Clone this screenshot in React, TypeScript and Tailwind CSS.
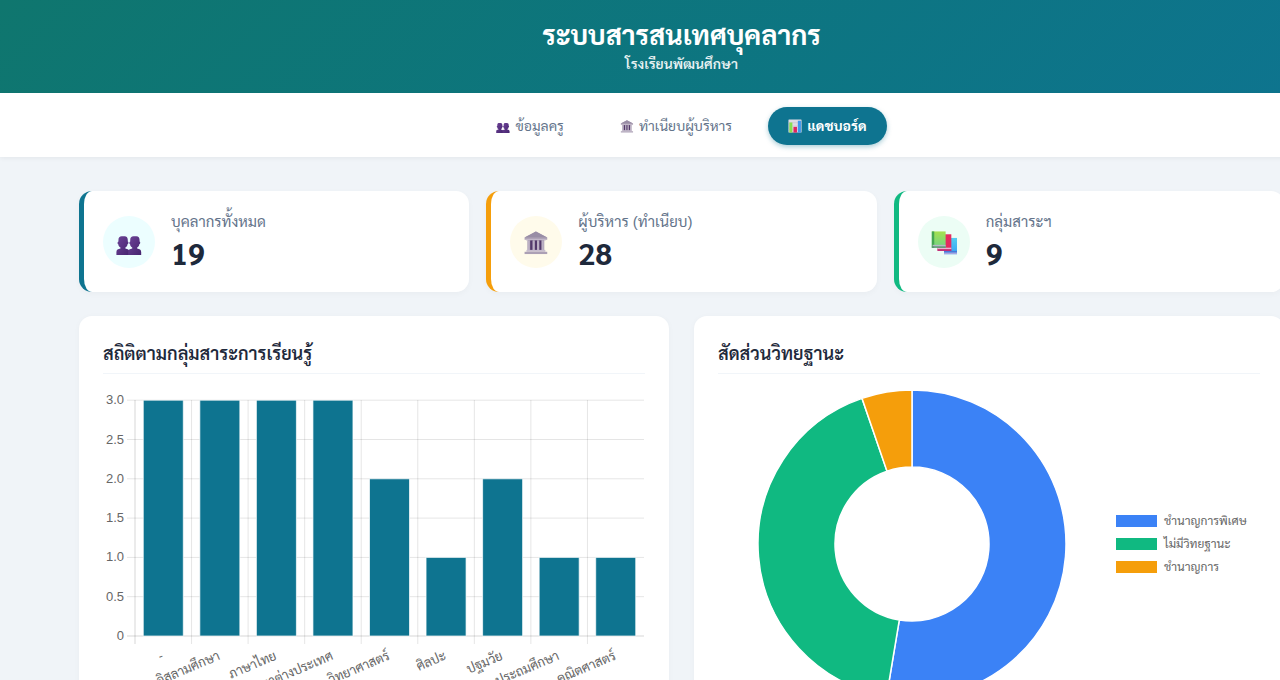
import type { ReactNode } from "react";

type IconProps = { className?: string };

function PeopleIcon({ className }: IconProps) {
  return (
    <svg viewBox="0 0 32 32" className={className} aria-hidden="true">
      <defs>
        <linearGradient id="bust" x1="0" y1="0" x2="1" y2="1">
          <stop offset="0" stopColor="#6d4397" />
          <stop offset="1" stopColor="#46246f" />
        </linearGradient>
      </defs>
      {[0, 14.5].map((x) => (
        <path
          key={x}
          transform={`translate(${x} 4)`}
          fill="url(#bust)"
          d="M3 9.500C3 6.500 4.500 5 7 5h3.500c2.800 0 4 1.800 4 4.500v2c1.200.3 1.200 3-.3 3.200-.3 2.300-1.200 3.300-2.700 4v1.300c2.900.5 5 1.500 5 4.200v3.800H.500v-3.800c0-2.700 2-3.700 5-4.200v-1.300c-1.500-.7-2.400-1.700-2.700-4-1.500-.2-1-2.900.2-3.200z"
        />
      ))}
    </svg>
  );
}

function BuildingIcon({ className }: IconProps) {
  return (
    <svg viewBox="0 0 32 32" className={className} aria-hidden="true">
      <g transform="translate(1 2) scale(.93)">
        <rect x="5" y="12" width="22" height="15" fill="#8d8299" />
        <path d="M16 1 31 9v3H1V9z" fill="#aea2b7" />
        <path d="M16 1 31 9H1z" fill="#998da6" />
        <rect x="3" y="11" width="26" height="2" fill="#c3b8ca" />
        {[8.5, 14, 19.5].map((x) => (
          <rect key={x} x={x} y="13" width="4" height="13" fill="#53396b" />
        ))}
        {[5, 11.5, 17.5, 23.5].map((x) => (
          <rect key={x} x={x} y="13" width="3" height="13" fill="#bdb1c5" />
        ))}
        <rect x="3.500" y="25.500" width="25" height="2.500" fill="#c7bdce" />
        <rect x="1" y="28" width="30" height="3" fill="#aca0b5" />
      </g>
    </svg>
  );
}

function BooksIcon({ className }: IconProps) {
  return (
    <svg viewBox="0 0 32 32" className={className} aria-hidden="true">
      <defs>
        <linearGradient id="greenBook" x1="0" y1="0" x2="0" y2="1">
          <stop offset="0" stopColor="#a5df4f" />
          <stop offset="1" stopColor="#70d385" />
        </linearGradient>
        <linearGradient id="blueBook" x1="0" y1="0" x2="0" y2="1">
          <stop offset="0" stopColor="#52cdf0" />
          <stop offset="1" stopColor="#35a2f5" />
        </linearGradient>
      </defs>
      <rect x="16" y="11" width="16" height="20" fill="url(#blueBook)" />
      <rect x="16" y="27" width="16" height="2" fill="#4a77d8" />
      <rect x="16" y="29" width="16" height="2" fill="#a9a5df" />
      <rect x="8" y="6.500" width="17" height="20" fill="#e5295f" />
      <rect x="8" y="23" width="17" height="2" fill="#e6b5d0" />
      <rect x="8" y="25" width="17" height="2" fill="#bf2c77" />
      <rect x="1" y="3" width="17" height="20" fill="url(#greenBook)" />
      <rect x="1" y="3" width="3" height="20" fill="#45a653" />
      <rect x="2" y="19.500" width="16" height="2" fill="#b8b7c5" />
      <rect x="1" y="21.500" width="17" height="1.500" fill="#5c8a78" />
    </svg>
  );
}

function BarsIcon({ className }: IconProps) {
  return (
    <svg viewBox="0 0 32 32" className={className} aria-hidden="true">
      <rect x="1" y="1" width="30" height="30" rx="1" fill="#dedae4" />
      <path d="M1 8.500h30M1 16h30M1 23.500h30" stroke="#bdb6c8" />
      <rect x="3" y="8" width="7" height="23" fill="#86e04f" />
      <rect x="12.500" y="18" width="8" height="13" fill="#e0245e" />
      <rect x="22.500" y="4" width="7" height="27" fill="#3f97ec" />
    </svg>
  );
}

const tabs: { label: string; icon: ReactNode; active?: boolean }[] = [
  { label: "ข้อมูลครู", icon: <PeopleIcon className="size-3.5" /> },
  { label: "ทำเนียบผู้บริหาร", icon: <BuildingIcon className="size-3.5" /> },
  { label: "แดชบอร์ด", icon: <BarsIcon className="size-3.5" />, active: true },
];

const stats = [
  {
    label: "บุคลากรทั้งหมด",
    value: 19,
    border: "border-[#0e7490]",
    circle: "bg-[#ecfeff]",
    icon: <PeopleIcon className="size-[26px]" />,
  },
  {
    label: "ผู้บริหาร (ทำเนียบ)",
    value: 28,
    border: "border-[#f59e0b]",
    circle: "bg-[#fffbeb]",
    icon: <BuildingIcon className="size-[26px]" />,
  },
  {
    label: "กลุ่มสาระฯ",
    value: 9,
    border: "border-[#10b981]",
    circle: "bg-[#ecfdf5]",
    icon: <BooksIcon className="size-[26px]" />,
  },
];

const subjects = [
  { name: "-", count: 3 },
  { name: "อิสลามศึกษา", count: 3 },
  { name: "ภาษาไทย", count: 3 },
  { name: "ภาษาต่างประเทศ", count: 3 },
  { name: "วิทยาศาสตร์", count: 2 },
  { name: "ศิลปะ", count: 1 },
  { name: "ปฐมวัย", count: 2 },
  { name: "ประถมศึกษา", count: 1 },
  { name: "คณิตศาสตร์", count: 1 },
];

const ticks = ["0", "0.5", "1.0", "1.5", "2.0", "2.5", "3.0"];

function SubjectChart() {
  const left = 32;
  const right = 541;
  const base = 246;
  const unit = 78.6;
  const step = (right - left) / subjects.length;
  return (
    <svg viewBox="0 0 542 308" className="block w-full" role="img" aria-label="สถิติตามกลุ่มสาระการเรียนรู้">
      {ticks.map((t, i) => {
        const y = base - (i * unit) / 2;
        return (
          <g key={t}>
            <line x1={left - 8} x2={right} y1={y} y2={y} stroke="#000" strokeOpacity={i === 0 ? 0.16 : 0.1} />
            <text x={left - 11} y={y + 4} textAnchor="end" className="fill-[#666] text-[13px]">
              {t}
            </text>
          </g>
        );
      })}
      {subjects.map((s, i) => {
        const x = left + i * step;
        return <line key={s.name} x1={x} x2={x} y1={10} y2={base + 8} stroke="#000" strokeOpacity={i === 0 ? 0.16 : 0.1} />;
      })}
      {subjects.map((s, i) => {
        const mid = left + (i + 0.5) * step;
        return (
          <g key={s.name}>
            <rect
              x={mid - 20}
              y={base - s.count * unit}
              width={40}
              height={s.count * unit}
              fill="#0e7490"
              stroke="#fff"
              strokeOpacity={0.7}
            />
            <text
              transform={`translate(${mid + 1} ${base + 23}) rotate(-23)`}
              textAnchor="end"
              className="fill-[#666] text-[13px]"
            >
              {s.name}
            </text>
          </g>
        );
      })}
    </svg>
  );
}

const ranks = [
  { name: "ชำนาญการพิเศษ", count: 10, color: "#3b82f6", swatch: "bg-[#3b82f6]" },
  { name: "ไม่มีวิทยฐานะ", count: 8, color: "#10b981", swatch: "bg-[#10b981]" },
  { name: "ชำนาญการ", count: 1, color: "#f59e0b", swatch: "bg-[#f59e0b]" },
];

function slicePath(from: number, to: number) {
  const point = (r: number, t: number) =>
    `${154 + r * Math.sin(2 * Math.PI * t)} ${154 - r * Math.cos(2 * Math.PI * t)}`;
  const large = to - from > 0.5 ? 1 : 0;
  return `M${point(154, from)}A154 154 0 ${large} 1 ${point(154, to)}L${point(77, to)}A77 77 0 ${large} 0 ${point(77, from)}Z`;
}

function RankChart() {
  const total = ranks.reduce((sum, r) => sum + r.count, 0);
  let start = 0;
  return (
    <div className="flex items-center gap-[50px] pl-10">
      <svg viewBox="0 0 308 308" className="size-[308px] shrink-0" role="img" aria-label="สัดส่วนวิทยฐานะ">
        {ranks.map((r) => {
          const from = start;
          start += r.count / total;
          return <path key={r.name} d={slicePath(from, start)} fill={r.color} stroke="#fff" strokeWidth={1.5} />;
        })}
      </svg>
      <ul className="text-xs text-[#666]">
        {ranks.map((r) => (
          <li key={r.name} className="flex items-center gap-[7px] leading-[23px] whitespace-nowrap">
            <span className={`h-3 w-[41px] ${r.swatch}`} />
            {r.name}
          </li>
        ))}
      </ul>
    </div>
  );
}

function Panel({ title, children }: { title: string; children: ReactNode }) {
  return (
    <section className="rounded-[13px] bg-white px-6 pt-[25px] pb-6 shadow-[0_1px_6px_rgba(0,0,0,0.03)]">
      <h2 className="mb-4 border-b border-[#f1f5f9] pb-[5px] text-lg leading-[27px] font-semibold text-[#1e293b]">{title}</h2>
      {children}
    </section>
  );
}

export default function App() {
  return (
    <div className="min-h-screen overflow-x-clip bg-[#f0f4f8] font-['Liberation_Sans','Sarabun','Noto_Sans_Thai_Looped','Noto_Looped_Thai','Loma','Noto_Sans_Thai',sans-serif]">
      <div className="min-w-[1363px]">
        <header className="bg-linear-135 from-[#0f766e] to-[#0e7490] pt-5 pb-[17px] text-center text-white">
          <h1 className="text-[27px] leading-8 font-bold">ระบบสารสนเทศบุคลากร</h1>
          <p className="pt-px text-sm leading-[23px] font-semibold opacity-90">โรงเรียนพัฒนศึกษา</p>
        </header>
        <nav className="flex justify-center gap-4 bg-white pt-3.5 pb-3 shadow-[0_1px_5px_rgba(0,0,0,0.06)]">
          {tabs.map((t) => (
            <button
              key={t.label}
              type="button"
              className={`flex h-[38px] items-center gap-[5px] rounded-full px-5 text-sm ${
                t.active ? "bg-[#0e7490] font-bold text-white shadow-[0_2px_5px_rgba(14,116,144,0.35)]" : "text-[#64748b]"
              }`}
            >
              {t.icon}
              {t.label}
            </button>
          ))}
        </nav>
        <main className="mx-auto max-w-[1205px] pt-[34px] pb-8">
          <div className="mb-6 grid grid-cols-3 gap-[17px]">
            {stats.map((s) => (
              <article
                key={s.label}
                className={`flex h-[101px] items-center gap-4 rounded-[13px] border-l-[5px] bg-white px-[19px] shadow-[0_2px_6px_rgba(0,0,0,0.03)] ${s.border}`}
              >
                <span className={`flex size-[52px] shrink-0 items-center justify-center rounded-full ${s.circle}`}>{s.icon}</span>
                <div>
                  <h3 className="text-[15px] leading-6 text-[#64748b]">{s.label}</h3>
                  <p className="pb-0.5 font-['Sarabun','Noto_Sans_Thai_Looped','Noto_Looped_Thai','Noto_Sans',sans-serif] text-3xl leading-[38px] font-bold text-[#1e293b]">
                    {s.value}
                  </p>
                </div>
              </article>
            ))}
          </div>
          <div className="grid grid-cols-2 gap-[25px]">
            <Panel title="สถิติตามกลุ่มสาระการเรียนรู้">
              <SubjectChart />
            </Panel>
            <Panel title="สัดส่วนวิทยฐานะ">
              <RankChart />
            </Panel>
          </div>
        </main>
      </div>
    </div>
  );
}
